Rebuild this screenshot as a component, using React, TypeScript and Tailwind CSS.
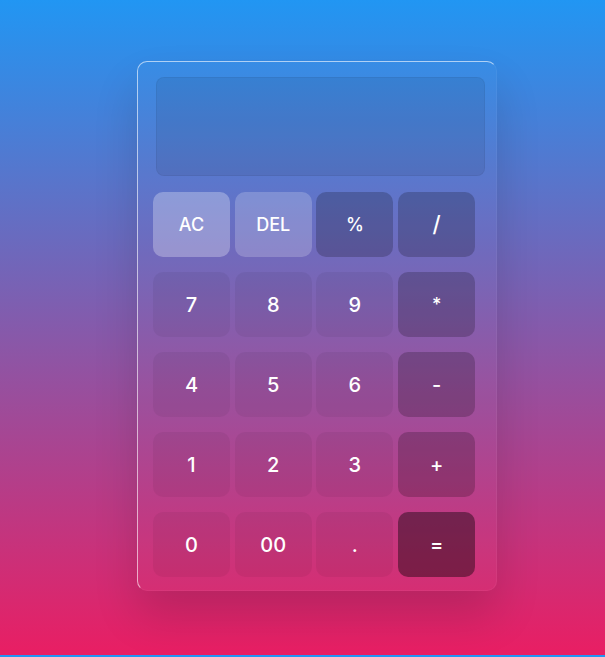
const KEYS = [
  { label: "AC", tone: "bg-white/28", text: "text-[18px]" },
  { label: "DEL", tone: "bg-white/20", text: "text-[18px]" },
  { label: "%", tone: "bg-black/20", text: "text-[18px]" },
  { label: "/", tone: "bg-black/20", text: "text-[22px]" },
  { label: "7", tone: "bg-black/5", text: "text-[20px]" },
  { label: "8", tone: "bg-black/5", text: "text-[20px]" },
  { label: "9", tone: "bg-black/5", text: "text-[20px]" },
  { label: "*", tone: "bg-black/20", text: "text-[18px]" },
  { label: "4", tone: "bg-black/5", text: "text-[20px]" },
  { label: "5", tone: "bg-black/5", text: "text-[20px]" },
  { label: "6", tone: "bg-black/5", text: "text-[20px]" },
  { label: "-", tone: "bg-black/20", text: "text-[20px]" },
  { label: "1", tone: "bg-black/5", text: "text-[20px]" },
  { label: "2", tone: "bg-black/5", text: "text-[20px]" },
  { label: "3", tone: "bg-black/5", text: "text-[20px]" },
  { label: "+", tone: "bg-black/20", text: "text-[20px]" },
  { label: "0", tone: "bg-black/5", text: "text-[20px]" },
  { label: "00", tone: "bg-black/5", text: "text-[20px]" },
  { label: ".", tone: "bg-black/5", text: "text-[20px]" },
  { label: "=", tone: "bg-black/40", text: "text-[20px]" },
];

export default function App() {
  return (
    <div className="min-h-screen bg-[#2196f3] font-['Inter','Open_Sans',sans-serif]">
      <div className="h-[655px] overflow-hidden bg-[linear-gradient(#2196f3,#e91e63)] pt-[61px] pl-[137px]">
        {/* Calculator card */}
        <div className="w-[360px] h-[530px] rounded-[10px] border border-white/60 border-r-white/5 border-b-white/5 bg-white/[0.02] shadow-[0_25px_45px_rgba(0,0,0,0.14)] pt-[15px] pl-[15px]">
          {/* Display */}
          <div className="ml-[3px] w-[329px] h-[99px] rounded-[8px] border border-black/5 bg-black/[0.07]" />

          {/* Keys */}
          <div className="mt-[16px] grid grid-cols-[repeat(4,77px)] gap-x-[4.7px] gap-y-[15px]">
            {KEYS.map((key) => (
              <button
                key={key.label}
                className={`h-[65px] rounded-[10px] ${key.tone} flex items-center justify-center font-medium text-white ${key.text}`}
              >
                {key.label}
              </button>
            ))}
          </div>
        </div>
      </div>
    </div>
  );
}
